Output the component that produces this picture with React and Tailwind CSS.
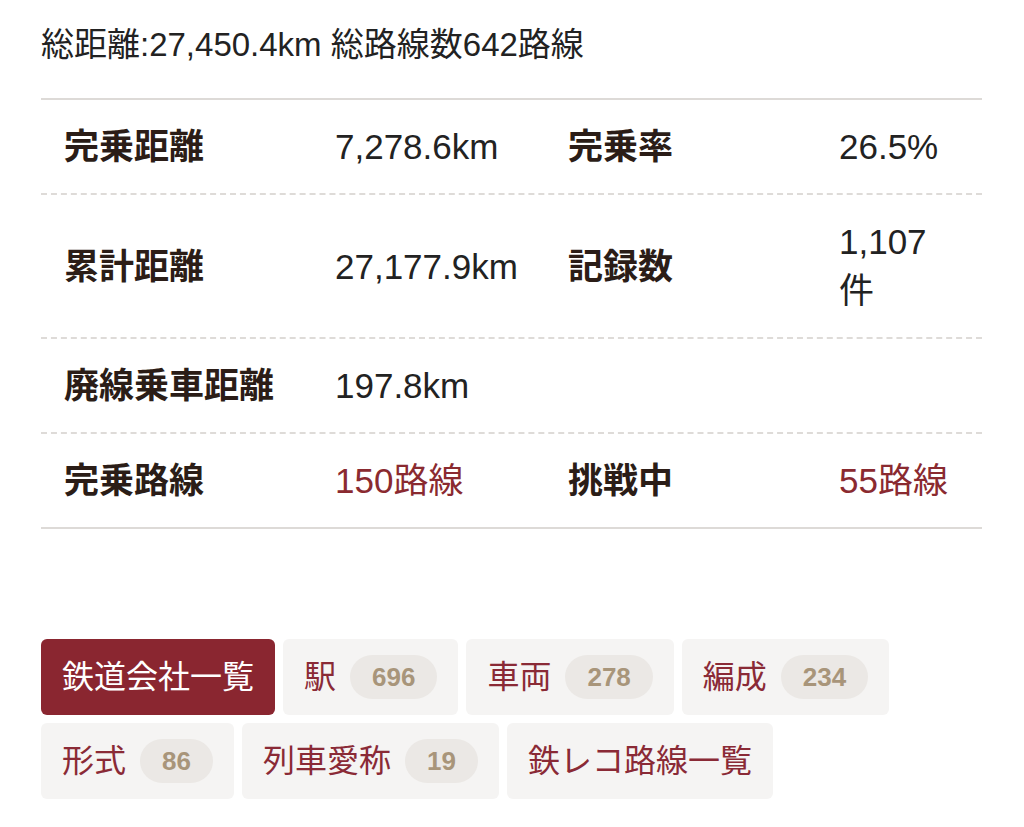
import React from 'react';

const rows = [
    [
        { label: '完乗距離', value: '7,278.6km' },
        { label: '完乗率', value: '26.5%' },
    ],
    [
        { label: '累計距離', value: '27,177.9km' },
        { label: '記録数', value: ['1,107', '件'] },
    ],
    [{ label: '廃線乗車距離', value: '197.8km' }],
    [
        { label: '完乗路線', value: '150路線', red: true },
        { label: '挑戦中', value: '55路線', red: true },
    ],
];

const tabs = [
    [
        { name: '鉄道会社一覧', active: true },
        { name: '駅', count: 696 },
        { name: '車両', count: 278 },
        { name: '編成', count: 234 },
    ],
    [
        { name: '形式', count: 86 },
        { name: '列車愛称', count: 19 },
        { name: '鉄レコ路線一覧' },
    ],
];

const StatRow = ({ cells, last }) => (
    <div
        className={`grid grid-cols-[272px_232px_272px_165px] items-center ${
            last ? '' : 'border-b-2 border-dashed border-[#dedbd8]'
        }`}
    >
        {[0, 1].map((i) => {
            const cell = cells[i];
            if (!cell) return <React.Fragment key={i}><div /><div /></React.Fragment>;
            return (
                <React.Fragment key={i}>
                    <div className="px-[23px] py-[22px] font-bold text-[#2b1d17] leading-[49px]">
                        {cell.label}
                    </div>
                    <div
                        className={`px-[22px] py-[22px] leading-[49px] whitespace-nowrap ${
                            cell.red ? 'text-[#8a2a30]' : 'text-[#222]'
                        }`}
                    >
                        {Array.isArray(cell.value)
                            ? cell.value.map((v) => (
                                  <span key={v} className="block">
                                      {v}
                                  </span>
                              ))
                            : cell.value}
                    </div>
                </React.Fragment>
            );
        })}
    </div>
);

const Tab = ({ name, count, active }) => (
    <button
        className={`flex items-center gap-[14px] h-[76px] px-[21px] rounded-[6px] text-[32px] ${
            active ? 'bg-[#8a2630] text-white' : 'bg-[#f5f4f3] text-[#8a2a36]'
        }`}
    >
        <span>{name}</span>
        {count !== undefined && (
            <span className="flex items-center h-[44px] px-[22px] rounded-full bg-[#ebe8e5] text-[#a8957a] text-[26px] font-bold">
                {count}
            </span>
        )}
    </button>
);

export default function App() {
    return (
        <div
            className="min-h-screen bg-white pt-[21px] pl-[41px] pr-[42px]"
            style={{ fontFamily: '"Liberation Sans", "Noto Sans CJK JP", sans-serif' }}
        >
            <p className="text-[33px] leading-[48px] text-[#222] mb-[29px]">
                総距離:27,450.4km 総路線数642路線
            </p>

            <div className="border-y-2 border-[#dddad7] text-[35px]">
                {rows.map((cells, i) => (
                    <StatRow key={i} cells={cells} last={i === rows.length - 1} />
                ))}
            </div>

            <div className="mt-[110px] flex flex-col gap-[8px]">
                {tabs.map((line, i) => (
                    <div key={i} className="flex gap-[8px]">
                        {line.map((t) => (
                            <Tab key={t.name} {...t} />
                        ))}
                    </div>
                ))}
            </div>
        </div>
    );
}
